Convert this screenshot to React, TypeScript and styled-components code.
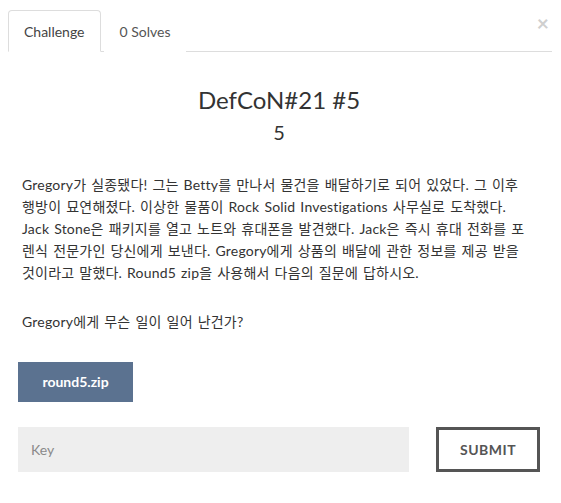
import styled, { createGlobalStyle } from 'styled-components'

const GlobalStyle = createGlobalStyle`
  html, body {
    margin: 0;
    padding: 0;
    background: #fff;
  }
  body {
    font-family: Lato, "Noto Sans CJK KR", sans-serif;
    color: #333;
  }
`

const Modal = styled.div`
  position: relative;
  width: 561px;
  height: 503px;
  box-sizing: border-box;
  padding: 10px 9px 0 8px;
`

const Close = styled.button`
  position: absolute;
  top: 12px;
  right: 12px;
  border: 0;
  background: none;
  padding: 0;
  font-family: Lato, sans-serif;
  font-size: 21px;
  font-weight: 700;
  line-height: 1;
  color: #cfcfcf;
  cursor: pointer;
`

const TabBar = styled.div`
  display: flex;
  border-bottom: 1px solid #ddd;
`

const Tab = styled.div<{ $active?: boolean }>`
  box-sizing: border-box;
  height: 42px;
  margin-bottom: -1px;
  margin-right: 3px;
  padding: 0 15px;
  display: flex;
  align-items: center;
  font-size: 14px;
  color: ${p => (p.$active ? '#444' : '#555')};
  background: #fff;
  border: 1px solid ${p => (p.$active ? '#ddd' : 'transparent')};
  border-bottom-color: ${p => (p.$active ? '#fff' : 'transparent')};
  border-radius: 4px 4px 0 0;
`

const Body = styled.div`
  padding: 0 12px 0 10px;
`

const Title = styled.h2`
  margin: 34px 0 0;
  text-align: center;
  font-size: 24px;
  font-weight: 400;
  line-height: 1.2;
  color: #333;
`

const Value = styled.h3`
  margin: 5px 0 0;
  text-align: center;
  font-size: 20px;
  font-weight: 400;
  line-height: 1.2;
  color: #333;
`

const Description = styled.div`
  margin-top: 30px;
  width: 508px;
  padding: 0 4px;
  font-size: 14px;
  line-height: 22px;
  letter-spacing: 0.2px;
  word-spacing: 1.2px;
  color: #333;

  p {
    margin: 0;
  }

  p + p {
    margin-top: 27px;
  }
`

const Files = styled.div`
  margin-top: 29px;
  display: flex;
`

const FileButton = styled.a`
  box-sizing: border-box;
  width: 115px;
  height: 40px;
  display: flex;
  align-items: center;
  justify-content: center;
  background: #5b7290;
  color: #fff;
  font-size: 14px;
  font-weight: 700;
  text-decoration: none;
`

const Form = styled.form`
  margin-top: 25px;
  display: flex;
  justify-content: space-between;
`

const KeyInput = styled.input`
  box-sizing: border-box;
  width: 391px;
  height: 45px;
  border: 0;
  background: #eee;
  padding: 0 13px;
  font-family: Lato, sans-serif;
  font-size: 14px;
  color: #333;
  outline: none;

  &::placeholder {
    color: #8a8a8a;
  }
`

const SubmitButton = styled.button`
  box-sizing: border-box;
  width: 104px;
  height: 45px;
  border: 3px solid #555;
  background: #fff;
  font-family: Lato, sans-serif;
  font-size: 14px;
  font-weight: 700;
  letter-spacing: 0.5px;
  color: #555;
`

export default function App() {
  return (
    <>
      <GlobalStyle />
      <Modal>
        <Close aria-label="Close">×</Close>
        <TabBar>
          <Tab $active>Challenge</Tab>
          <Tab>0 Solves</Tab>
        </TabBar>
        <Body>
          <Title>DefCoN#21 #5</Title>
          <Value>5</Value>
          <Description>
            <p>
              Gregory가 실종됐다! 그는 Betty를 만나서 물건을 배달하기로 되어 있었다. 그 이후 행방이 묘연해졌다. 이상한 물품이 Rock Solid Investigations 사무실로 도착했다. Jack Stone은 패키지를 열고 노트와 휴대폰을 발견했다. Jack은 즉시 휴대 전화를 포렌식 전문가인 당신에게 보낸다. Gregory에게 상품의 배달에 관한 정보를 제공 받을 것이라고 말했다. Round5 zip을 사용해서 다음의 질문에 답하시오.
            </p>
            <p>Gregory에게 무슨 일이 일어 난건가?</p>
          </Description>
          <Files>
            <FileButton href="#">round5.zip</FileButton>
          </Files>
          <Form onSubmit={e => e.preventDefault()}>
            <KeyInput placeholder="Key" />
            <SubmitButton type="submit">SUBMIT</SubmitButton>
          </Form>
        </Body>
      </Modal>
    </>
  )
}
